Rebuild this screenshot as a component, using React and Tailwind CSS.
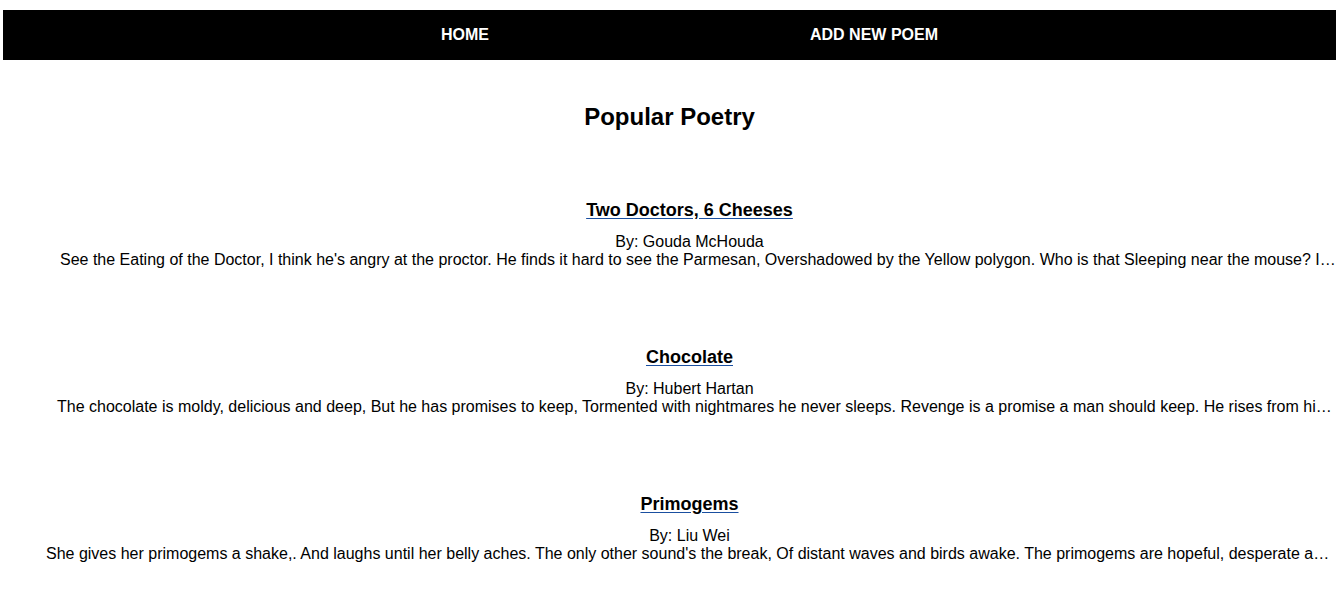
import React from "react";

const poems = [
  {
    title: "Two Doctors, 6 Cheeses",
    author: "Gouda McHouda",
    body: "See the Eating of the Doctor, I think he's angry at the proctor. He finds it hard to see the Parmesan, Overshadowed by the Yellow polygon. Who is that Sleeping near the mouse? I think I know whose cheese this is.",
    pad: "pl-[17px]",
  },
  {
    title: "Chocolate",
    author: "Hubert Hartan",
    body: "The chocolate is moldy, delicious and deep, But he has promises to keep, Tormented with nightmares he never sleeps. Revenge is a promise a man should keep. He rises from his bed at night.",
    pad: "pl-[14px]",
  },
  {
    title: "Primogems",
    author: "Liu Wei",
    body: "She gives her primogems a shake,. And laughs until her belly aches. The only other sound's the break, Of distant waves and birds awake. The primogems are hopeful, desperate and deep.",
    pad: "pl-[3px]",
  },
];

const PoemItem = ({ poem }) => (
  <li className="mb-[78px]">
    <h3 className="text-[18px] leading-[21px] font-bold text-center">
      <a href="#" className="text-black underline decoration-[#1a4fa0] underline-offset-2">
        {poem.title}
      </a>
    </h3>
    <div className="mt-[12px] text-[16px] leading-[18px] text-center">By: {poem.author}</div>
    <div className={`text-[16px] leading-[18px] whitespace-nowrap overflow-hidden text-ellipsis ${poem.pad}`}>
      {poem.body}
    </div>
  </li>
);

export default function App() {
  return (
    <div className="min-h-[600px] bg-white text-black font-['Liberation_Sans',Arial,sans-serif] pt-[10px] pl-[3px] pr-[5px]">
      {/* Nav */}
      <nav className="bg-black h-[50px]">
        <ul className="h-full pl-[40px] flex items-center justify-center gap-[321px] text-white font-bold text-[16px]">
          <li><a href="#">HOME</a></li>
          <li><a href="#">ADD NEW POEM</a></li>
        </ul>
      </nav>

      {/* Heading */}
      <h2 className="mt-[43px] text-[24px] leading-[28px] font-bold text-center">Popular Poetry</h2>

      {/* Poems */}
      <ul className="mt-[69px] pl-[40px]">
        {poems.map((p) => (
          <PoemItem key={p.title} poem={p} />
        ))}
      </ul>
    </div>
  );
}
